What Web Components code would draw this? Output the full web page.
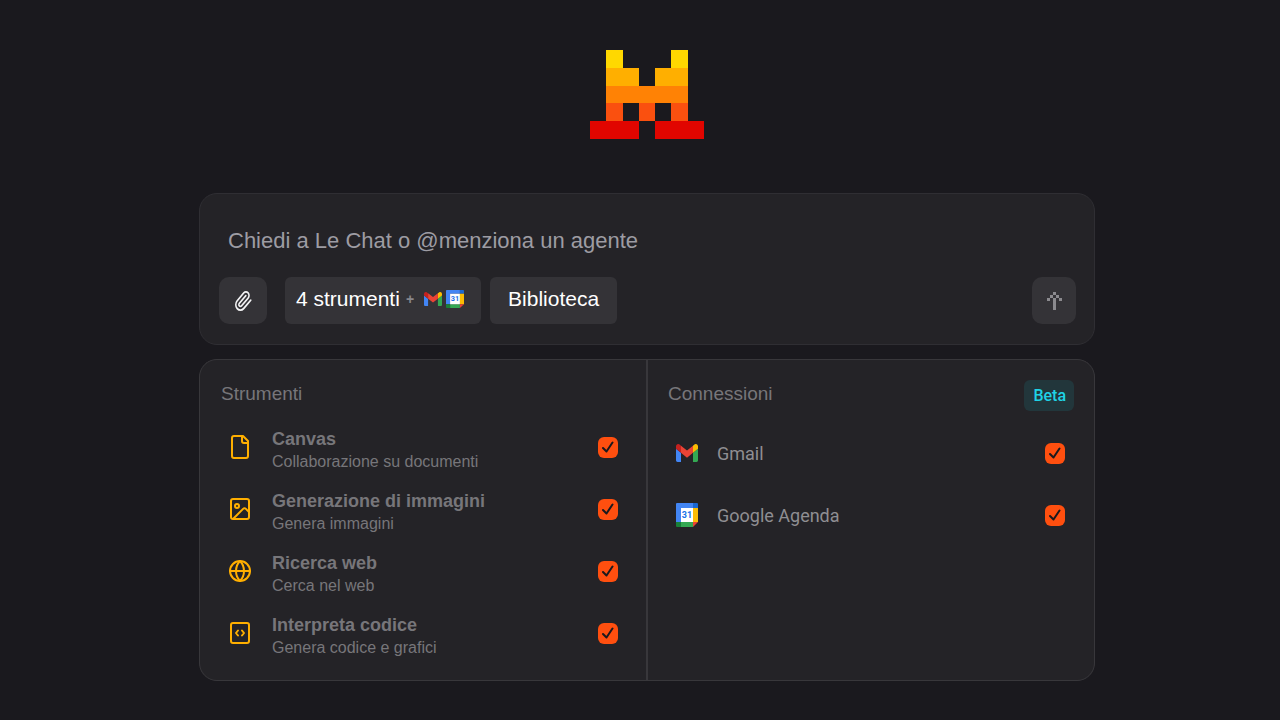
<!DOCTYPE html>
<html lang="it">
<head>
<meta charset="utf-8">
<meta name="viewport" content="width=device-width, initial-scale=1">
<title>Le Chat</title>
<style>
  body {
    margin: 0;
    background: #1a191e;
    color: #fff;
    font-family: "Liberation Sans", Arial, sans-serif;
  }
</style>
</head>
<body>
<chat-app></chat-app>

<script>
(function () {
  const icons = {
    clip: `<svg viewBox="1 1 22 22" width="17" height="20" preserveAspectRatio="none" fill="none" stroke="#f4f4f5"><path d="M21.44 11.05l-9.19 9.19a6 6 0 0 1-8.49-8.49l8.57-8.57A4 4 0 1 1 18 8.84l-8.59 8.57a2 2 0 0 1-2.83-2.83l8.49-8.48"/></svg>`,
    send: `<svg viewBox="0 0 5 6" width="15" height="18"><path d="M2 0h1v1H2zM1 1h1v1H1zM3 1h1v1H3zM0 2h1v1H0zM4 2h1v1H4zM2 2h1v4H2z"/></svg>`,
    file: `<svg viewBox="0 0 24 24" width="24" height="24"><path d="M15 1H6a2 2 0 0 0-2 2v18a2 2 0 0 0 2 2h12a2 2 0 0 0 2-2V6z"/><path d="M14 1v5a2 2 0 0 0 2 2h4"/></svg>`,
    image: `<svg viewBox="0 0 24 24" width="24" height="24"><rect x="3" y="2" width="18" height="20" rx="2"/><circle cx="9" cy="9" r="2"/><path d="M21 15l-3.1-3.1a2 2 0 0 0-2.8 0L6 21"/></svg>`,
    globe: `<svg viewBox="0 0 24 24" width="24" height="24"><circle cx="12" cy="12" r="10"/><path d="M12 2a14.5 14.5 0 0 0 0 20 14.5 14.5 0 0 0 0-20M2 12h20"/></svg>`,
    code: `<svg viewBox="0 0 24 24" width="24" height="24"><rect x="3" y="2" width="18" height="20" rx="2"/><path d="M10 9.5L8 12l2 2.5M14 9.5L16 12l-2 2.5"/></svg>`,
    gmail: `<svg viewBox="52 42 88 66" preserveAspectRatio="none"><path fill="#4285f4" d="M58 108h14V74L52 59v43c0 3.32 2.69 6 6 6"/><path fill="#34a853" d="M120 108h14c3.32 0 6-2.69 6-6V59l-20 15"/><path fill="#fbbc04" d="M120 48v26l20-15v-8c0-7.42-8.47-11.65-14.4-7.2"/><path fill="#ea4335" d="M72 74V48l24 18 24-18v26L96 92"/><path fill="#c5221f" d="M52 51v8l20 15V48l-5.6-4.2c-5.94-4.45-14.4-.22-14.4 7.2"/></svg>`,
    calendar: `<svg viewBox="0 0 22 24" preserveAspectRatio="none"><path fill="#4285f4" d="M1 0h16v5H5v14H0V1a1 1 0 0 1 1-1z"/><path fill="#1967d2" d="M17 0h4a1 1 0 0 1 1 1v4h-5z"/><path fill="#fbbc04" d="M17 5h5v14h-5z"/><path fill="#34a853" d="M5 19h12v5H5z"/><path fill="#188038" d="M0 19h5v5H1a1 1 0 0 1-1-1z"/><path fill="#ea4335" d="M17 19h5l-5 5z"/><path fill="#fff" d="M5 5h12v14H5z"/><text x="11" y="15" text-anchor="middle" font-family="Roboto, sans-serif" font-size="9" font-weight="700" fill="#1a73e8">31</text></svg>`,
  };

  class ChatLogo extends HTMLElement {
    connectedCallback() {
      this.attachShadow({ mode: "open" }).innerHTML = `
        <style>
          :host { display: block; }
          svg { display: block; }
        </style>
        <svg viewBox="0 0 7 5" width="114" height="89" preserveAspectRatio="none" shape-rendering="crispEdges" role="img" aria-label="Mistral">
          <path fill="#ffd800" d="M1 0h1v1H1zM5 0h1v1H5z"/>
          <path fill="#ffaf00" d="M1 1h2v1H1zM4 1h2v1H4z"/>
          <path fill="#ff8205" d="M1 2h5v1H1z"/>
          <path fill="#fa500f" d="M1 3h1v1H1zM3 3h1v1H3zM5 3h1v1H5z"/>
          <path fill="#e10500" d="M0 4h3v1H0zM4 4h3v1H4z"/>
        </svg>
      `;
    }
  }

  class ChatIcon extends HTMLElement {
    connectedCallback() {
      this.attachShadow({ mode: "open" }).innerHTML = `
        <style>
          :host { display: inline-grid; place-items: center; flex: none; }
          svg {
            display: block;
            fill: none;
            stroke-width: 2;
            stroke-linecap: round;
            stroke-linejoin: round;
          }
          :host([name="file"]) svg, :host([name="image"]) svg,
          :host([name="globe"]) svg, :host([name="code"]) svg { stroke: #ffaf00; }
          :host([name="send"]) svg { fill: #8b8a8e; }
          :host([name="gmail"]) svg { width: 22px; height: 18px; }
          :host([name="calendar"]) svg { width: 22px; height: 24px; }
          :host([name="gmail"][small]) svg { width: 18px; height: 14px; }
          :host([name="calendar"][small]) svg { width: 18px; height: 18px; }
        </style>
        ${icons[this.getAttribute("name")]}
      `;
    }
  }

  class ChatButton extends HTMLElement {
    connectedCallback() {
      const label = this.getAttribute("label");
      this.attachShadow({ mode: "open" }).innerHTML = `
        <style>
          :host { display: block; }
          button {
            display: flex;
            align-items: center;
            justify-content: center;
            gap: 4px;
            height: 47px;
            padding: 0 18px 3px;
            border: 0;
            border-radius: 6px;
            background: #343337;
            color: #fff;
            font: inherit;
            font-size: 21px;
            line-height: 24px;
            cursor: pointer;
          }
          button:hover { background: #3d3c41; }
          :host([kind="tools"]) button { padding: 0 17px 3px 11px; }
          :host([kind="icon"]) button { width: 48px; padding: 0; border-radius: 10px; }
          :host([kind="send"]) button { width: 44px; padding: 0; border-radius: 10px; }
        </style>
        <button type="button" ${label ? `aria-label="${label}"` : ""}><slot></slot></button>
      `;
    }
  }

  class ChatPrompt extends HTMLElement {
    connectedCallback() {
      this.attachShadow({ mode: "open" }).innerHTML = `
        <style>
          :host {
            display: block;
            box-sizing: border-box;
            padding: 33px 18px 20px 19px;
            border: 1px solid #2f2e33;
            border-radius: 18px;
            background: #242327;
          }
          input {
            display: block;
            box-sizing: border-box;
            width: 100%;
            height: 28px;
            padding: 0 9px;
            border: 0;
            outline: 0;
            background: none;
            color: #fff;
            font: inherit;
            font-size: 22px;
          }
          input::placeholder { color: #9d9ca3; opacity: 1; }
          .actions { display: flex; gap: 9px; margin-top: 22px; }
          .attach { margin-right: 9px; }
          .send { margin-left: auto; }
          .plus { color: #88878c; font-size: 14px; font-weight: 700; margin: 0 6px 0 2px; }
        </style>
        <input type="text" placeholder="Chiedi a Le Chat o @menziona un agente" aria-label="Messaggio">
        <div class="actions">
          <chat-button class="attach" kind="icon" label="Allega file"><chat-icon name="clip"></chat-icon></chat-button>
          <chat-button kind="tools">
            <span>4 strumenti</span><span class="plus">+</span>
            <chat-icon name="gmail" small></chat-icon>
            <chat-icon name="calendar" small></chat-icon>
          </chat-button>
          <chat-button>Biblioteca</chat-button>
          <chat-button class="send" kind="send" label="Invia"><chat-icon name="send"></chat-icon></chat-button>
        </div>
      `;
    }
  }

  class ChatOption extends HTMLElement {
    connectedCallback() {
      this.attachShadow({ mode: "open" }).innerHTML = `
        <style>
          :host { display: block; }
          label {
            display: flex;
            align-items: center;
            height: 62px;
            padding: 0 9px 0 6px;
            cursor: pointer;
          }
          .icon { display: grid; place-items: center; width: 26px; margin-right: 19px; }
          .text {
            display: flex;
            flex-direction: column;
            flex: 1;
            padding-top: 7px;
            color: #77767a;
          }
          .name { font-size: 18px; line-height: 22px; font-weight: 700; }
          .hint { font-size: 16px; line-height: 24px; }
          :host([plain]) .icon { margin-right: 17px; }
          :host([plain]) .text { padding-top: 2px; }
          :host([plain]) .name {
            color: #8f8e92;
            font-family: Roboto, sans-serif;
            font-weight: 400;
          }
          :host([plain]) .hint { display: none; }
          .check { display: grid; }
          .check > * { grid-area: 1 / 1; }
          input {
            appearance: none;
            width: 20px;
            height: 21px;
            margin: 0;
            border-radius: 6px;
            background: #3d3c41;
          }
          input:checked { background: #ff4f0f; }
          svg { display: none; pointer-events: none; place-self: center; }
          input:checked + svg { display: block; }
        </style>
        <label>
          <span class="icon"><slot name="icon"></slot></span>
          <span class="text">
            <span class="name"><slot></slot></span>
            <span class="hint"><slot name="hint"></slot></span>
          </span>
          <span class="check">
            <input type="checkbox" checked>
            <svg viewBox="0 0 12 12" width="12" height="12" fill="none" stroke="#1a191e" stroke-width="2" stroke-linecap="round" stroke-linejoin="round"><path d="M1 7l3.5 3.5L10.5 1.5"/></svg>
          </span>
        </label>
      `;
    }
  }

  class ChatSection extends HTMLElement {
    connectedCallback() {
      this.attachShadow({ mode: "open" }).innerHTML = `
        <style>
          :host { display: block; padding: 20px 19px 16px 21px; background: #242327; }
          header { display: flex; justify-content: space-between; height: 36px; }
          h2 {
            margin: 2px 0 0;
            color: #77767a;
            font-size: 19px;
            line-height: 24px;
            font-weight: 400;
          }
          :host([spaced]) { padding: 20px 20px 16px; }
          :host([spaced]) header { height: 42px; }
        </style>
        <header><h2>${this.getAttribute("heading")}</h2><slot name="badge"></slot></header>
        <slot></slot>
      `;
    }
  }

  class ChatBadge extends HTMLElement {
    connectedCallback() {
      this.attachShadow({ mode: "open" }).innerHTML = `
        <style>
          :host {
            display: block;
            align-self: flex-start;
            padding: 1px 8px 0 9px;
            border-radius: 6px;
            background: #22363b;
            color: #1fd3e6;
            font: 500 16px/30px Roboto, sans-serif;
          }
        </style>
        <slot></slot>
      `;
    }
  }

  class ChatApp extends HTMLElement {
    connectedCallback() {
      this.attachShadow({ mode: "open" }).innerHTML = `
        <style>
          :host { display: block; padding: 50px 16px 39px 30px; }
          main {
            display: flex;
            flex-direction: column;
            max-width: 896px;
            margin: 0 auto;
          }
          chat-logo { align-self: center; margin-bottom: 54px; }
          /* the gap lets the panel colour through as the divider */
          .panel {
            display: grid;
            grid-template-columns: 1fr 1fr;
            gap: 2px;
            margin-top: 14px;
            border: 1px solid #38373b;
            border-radius: 18px;
            background: #38373b;
            overflow: hidden;
          }
        </style>
        <main>
          <chat-logo></chat-logo>
          <chat-prompt></chat-prompt>
          <div class="panel">
            <chat-section heading="Strumenti">
              <chat-option><chat-icon slot="icon" name="file"></chat-icon>Canvas<span slot="hint">Collaborazione su documenti</span></chat-option>
              <chat-option><chat-icon slot="icon" name="image"></chat-icon>Generazione di immagini<span slot="hint">Genera immagini</span></chat-option>
              <chat-option><chat-icon slot="icon" name="globe"></chat-icon>Ricerca web<span slot="hint">Cerca nel web</span></chat-option>
              <chat-option><chat-icon slot="icon" name="code"></chat-icon>Interpreta codice<span slot="hint">Genera codice e grafici</span></chat-option>
            </chat-section>
            <chat-section heading="Connessioni" spaced>
              <chat-badge slot="badge">Beta</chat-badge>
              <chat-option plain><chat-icon slot="icon" name="gmail"></chat-icon>Gmail</chat-option>
              <chat-option plain><chat-icon slot="icon" name="calendar"></chat-icon>Google Agenda</chat-option>
            </chat-section>
          </div>
        </main>
      `;
    }
  }

  customElements.define("chat-logo", ChatLogo);
  customElements.define("chat-icon", ChatIcon);
  customElements.define("chat-button", ChatButton);
  customElements.define("chat-prompt", ChatPrompt);
  customElements.define("chat-option", ChatOption);
  customElements.define("chat-section", ChatSection);
  customElements.define("chat-badge", ChatBadge);
  customElements.define("chat-app", ChatApp);
})();
</script>
</body>
</html>
